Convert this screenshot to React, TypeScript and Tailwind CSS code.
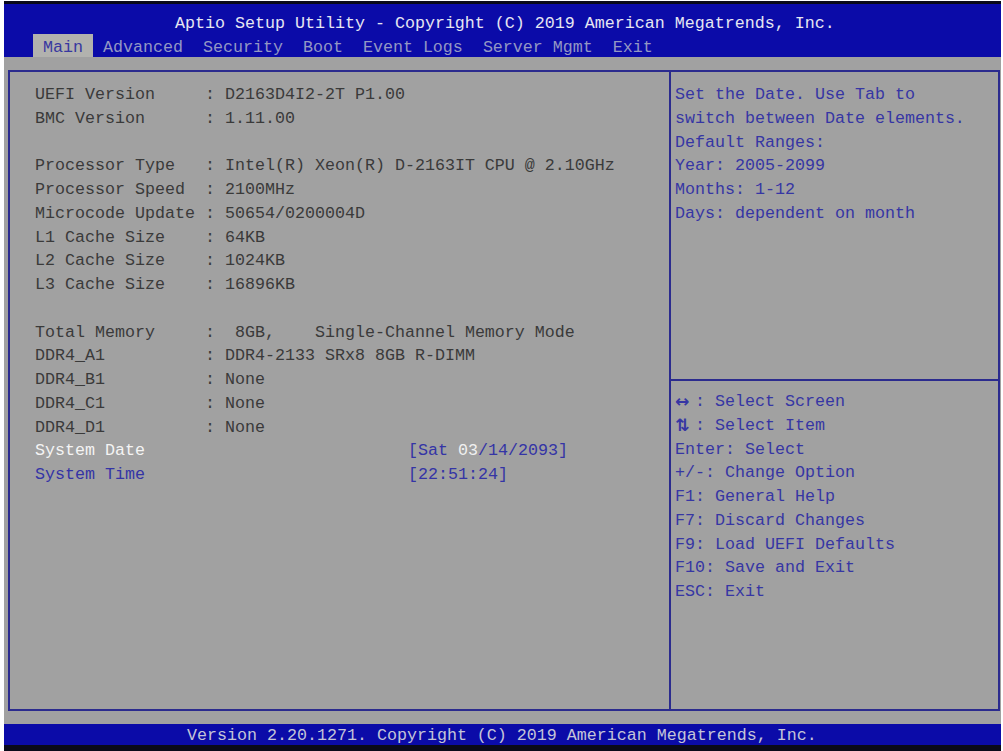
import React from "react";

const mono = { fontFamily: '"Liberation Mono", "DejaVu Sans Mono", monospace' };

type Row = { l?: string; v?: string; blank?: boolean };

const info: Row[] = [
  { l: "UEFI Version", v: ": D2163D4I2-2T P1.00" },
  { l: "BMC Version", v: ": 1.11.00" },
  { blank: true },
  { l: "Processor Type", v: ": Intel(R) Xeon(R) D-2163IT CPU @ 2.10GHz" },
  { l: "Processor Speed", v: ": 2100MHz" },
  { l: "Microcode Update", v: ": 50654/0200004D" },
  { l: "L1 Cache Size", v: ": 64KB" },
  { l: "L2 Cache Size", v: ": 1024KB" },
  { l: "L3 Cache Size", v: ": 16896KB" },
  { blank: true },
  { l: "Total Memory", v: ":  8GB,    Single-Channel Memory Mode" },
  { l: "DDR4_A1", v: ": DDR4-2133 SRx8 8GB R-DIMM" },
  { l: "DDR4_B1", v: ": None" },
  { l: "DDR4_C1", v: ": None" },
  { l: "DDR4_D1", v: ": None" },
];

const helpTop = [
  "Set the Date. Use Tab to",
  "switch between Date elements.",
  "Default Ranges:",
  "Year: 2005-2099",
  "Months: 1-12",
  "Days: dependent on month",
];

const keys: [string, string][] = [
  ["↔", ": Select Screen"],
  ["⇅", ": Select Item"],
  ["Enter", ": Select"],
  ["+/-", ": Change Option"],
  ["F1", ": General Help"],
  ["F7", ": Discard Changes"],
  ["F9", ": Load UEFI Defaults"],
  ["F10", ": Save and Exit"],
  ["ESC", ": Exit"],
];

const tabs = ["Main", "Advanced", "Security", "Boot", "Event Logs", "Server Mgmt", "Exit"];

export default function App() {
  return (
    <div
      className="w-[1003px] h-[751px] bg-white pl-[4px] pr-[2px] pt-[1px] overflow-hidden text-[16.667px] tracking-normal leading-[23.75px]"
      style={mono}
    >
      <div className="flex flex-col h-[750px]">
        <div className="h-[3px] bg-[#0a0a1a]" />
        {/* Header */}
        <div className="h-[53px] bg-[#0b0ba8] flex flex-col">
          <div className="h-[30px] pl-[171px] pt-[9px] text-[#e6e6f2] leading-[22px] whitespace-pre">
            Aptio Setup Utility - Copyright (C) 2019 American Megatrends, Inc.
          </div>
          <div className="h-[23px] flex pl-[29px] leading-[23px]">
            {tabs.map((t, i) => (
              <div
                key={t}
                className={
                  i === 0
                    ? "px-[10px] pt-[2px] bg-[#b2b2ae] text-[#3838a0]"
                    : "px-[10px] pt-[2px] text-[#9397c4]"
                }
              >
                {t}
              </div>
            ))}
          </div>
        </div>
        {/* Body */}
        <div className="flex-1 bg-[#a1a1a1] pt-[13px] pb-[13px] pl-[4px] pr-[1px] flex flex-col">
          <div className="flex-1 border-2 border-[#2b2b8e] flex">
            {/* left */}
            <div className="w-[659px] pl-[25px] pt-[11px] text-[#3a3a3a]">
              {info.map((r, i) =>
                r.blank ? (
                  <div key={i} className="h-[23.75px]" />
                ) : (
                  <div key={i} className="flex whitespace-pre">
                    <span className="w-[170px]">{r.l}</span>
                    <span>{r.v}</span>
                  </div>
                )
              )}
              <div className="flex whitespace-pre">
                <span className="w-[373px] text-[#f4f4f4]">System Date</span>
                <span className="text-[#3434a6]">
                  [Sat <span className="text-[#f0f0f0]">03</span>/14/2093]
                </span>
              </div>
              <div className="flex whitespace-pre">
                <span className="w-[373px] text-[#3434a6]">System Time</span>
                <span className="text-[#3434a6]">[22:51:24]</span>
              </div>
            </div>
            {/* right */}
            <div className="flex-1 border-l-2 border-[#2b2b8e] flex flex-col text-[#3636a4]">
              <div className="h-[309px] border-b-2 border-[#2b2b8e] pl-[4px] pt-[11px]">
                {helpTop.map((t) => (
                  <div key={t} className="whitespace-pre">
                    {t}
                  </div>
                ))}
              </div>
              <div className="pl-[4px] pt-[9px]">
                {keys.map(([k, v]) => (
                  <div key={v} className="flex whitespace-pre">
                    {k.length === 1 ? (
                      <span
                        className="inline-block w-[20px] text-left font-bold text-[17px]"
                        style={{ fontFamily: '"DejaVu Sans", sans-serif' }}
                      >
                        {k}
                      </span>
                    ) : (
                      <span>{k}</span>
                    )}
                    <span>{v}</span>
                  </div>
                ))}
              </div>
            </div>
          </div>
        </div>
        {/* Footer */}
        <div className="h-[21px] bg-[#0b0ba8] pl-[183px] pt-[2px] text-[#c4c4d8] leading-[20px] whitespace-pre">
          Version 2.20.1271. Copyright (C) 2019 American Megatrends, Inc.
        </div>
        <div className="h-[6px] bg-[#0a0a1a]" />
      </div>
    </div>
  );
}
